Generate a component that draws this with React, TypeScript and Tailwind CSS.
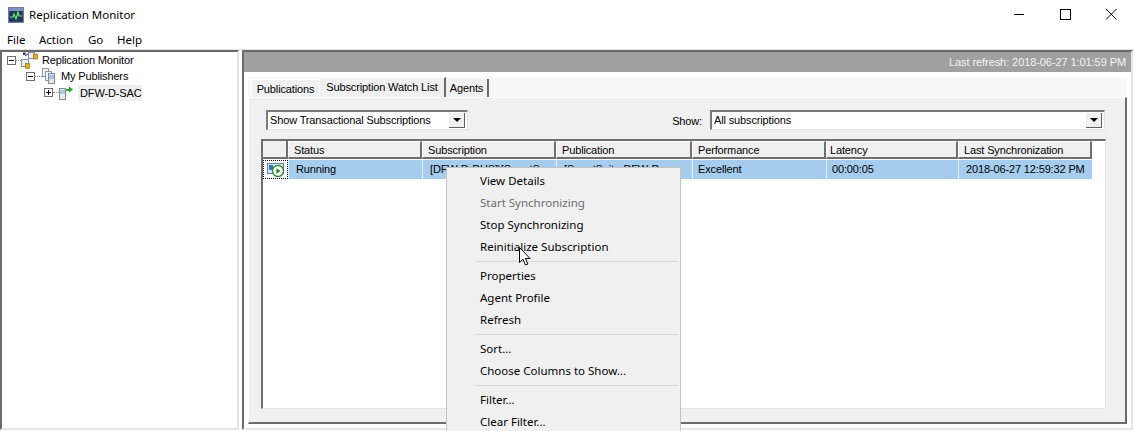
import React from "react";

const ui = "font-['Noto_Sans','Liberation_Sans',sans-serif] text-[11.5px] tracking-normal";
const ms = "font-['Liberation_Sans',Arial,sans-serif] text-[11px] tracking-[-0.14px]";

function AppIcon() {
  return (
    <svg width="16" height="16" viewBox="0 0 16 16" className="shrink-0">
      <rect x="0.5" y="0.5" width="15" height="15" fill="#33476f" stroke="#6a7ca8" />
      <rect x="1" y="1" width="14" height="3" fill="#7f93c2" />
      <rect x="2" y="4" width="12" height="10" fill="#1d3a4a" />
      <path d="M2 10h3l1-3 2 5 2-7 1 4h3" fill="none" stroke="#6fe08a" strokeWidth="1.2" />
    </svg>
  );
}

function Expander({ minus }: { minus?: boolean }) {
  return (
    <svg width="9" height="9" viewBox="0 0 9 9" className="shrink-0">
      <rect x="0.5" y="0.5" width="8" height="8" fill="#fff" stroke="#6f6f6f" />
      <path d={minus ? "M2 4.5h5" : "M2 4.5h5M4.5 2v5"} stroke="#000" />
    </svg>
  );
}

function Dots({ w }: { w: string }) {
  return <div className={`${w} shrink-0 border-t border-dotted border-[#8a8a8a]`} />;
}

function RootIcon() {
  return (
    <svg width="17" height="17" viewBox="0 0 17 17" className="shrink-0">
      <rect x="0.5" y="7.5" width="7" height="7" fill="#e8edf2" stroke="#8b96a3" />
      <rect x="7.5" y="0.5" width="6" height="6" fill="#e8edf2" stroke="#8b96a3" />
      <rect x="12.5" y="2" width="4" height="5" fill="#e5a91c" stroke="#8d6a12" strokeWidth="0.6" />
      <rect x="4.5" y="11.5" width="4" height="5" fill="#e5a91c" stroke="#8d6a12" strokeWidth="0.6" />
      <rect x="2" y="0.5" width="2.5" height="2.5" fill="#26336b" />
      <path d="M4 4 7 2" stroke="#26336b" />
    </svg>
  );
}

function PublishersIcon() {
  return (
    <svg width="14" height="16" viewBox="0 0 14 16" className="shrink-0">
      <rect x="0.5" y="0.5" width="6" height="8" fill="#eef1f5" stroke="#8b98a8" />
      <rect x="3.5" y="3.5" width="6" height="9" fill="#eef1f5" stroke="#8b98a8" />
      <rect x="6.5" y="5.5" width="6" height="10" fill="#dfe7ef" stroke="#7e8c9c" />
      <path d="M7 8h5M7 10h5" stroke="#6fa3c8" />
    </svg>
  );
}

function ServerIcon() {
  return (
    <svg width="16" height="14" viewBox="0 0 16 14" className="shrink-0">
      <rect x="0.5" y="2.5" width="6" height="11" fill="#e8edf2" stroke="#7e8c9c" />
      <path d="M1 5h5M1 7h5" stroke="#6fa3c8" />
      <path d="M7 3h3V0.5L14 3.5 10 6.5V5H7z" fill="#1fa51f" />
    </svg>
  );
}

function RunIcon() {
  return (
    <svg width="19" height="14" viewBox="0 0 19 14">
      <rect x="0.5" y="0.5" width="16" height="10" fill="#dbe7f3" stroke="#5f7fa6" />
      <rect x="2" y="2" width="4" height="5" fill="#2f74c0" />
      <circle cx="11" cy="8" r="5.5" fill="#fff" stroke="#2f8a2f" strokeWidth="1.4" />
      <path d="M9.3 5.2v5.6L13.5 8z" fill="#1f8f1f" />
    </svg>
  );
}

function Combo({ text, className }: { text: string; className: string }) {
  return (
    <div className={`${className} h-[20px] flex items-center bg-white border-t-2 border-l-2 border-[#7a7a7a] border-r border-b border-r-[#e3e3e3] border-b-[#e3e3e3] pr-[2px]`}>
      <span className="flex-1 pl-[2px] whitespace-nowrap">{text}</span>
      <div className="w-[16px] h-[15px] bg-[#f0f0f0] border-r border-b border-[#5f5f5f] flex items-center justify-center">
        <div className="w-0 h-0 border-l-[4px] border-r-[4px] border-t-[4px] border-l-transparent border-r-transparent border-t-black" />
      </div>
    </div>
  );
}

const cols = [
  { name: "Status", w: "w-[134px]", val: "Running", pl: "pl-[7px]", hpl: "pl-[5px]" },
  { name: "Subscription", w: "w-[134px]", val: "[DFW-D-DHS]\\[SmartS", pl: "pl-[7px]", hpl: "pl-[5px]" },
  { name: "Publication", w: "w-[136px]", val: "[SmartSuite-DFW-D", pl: "pl-[7px]", hpl: "pl-[5px]" },
  { name: "Performance", w: "w-[134px]", val: "Excellent", pl: "pl-[5px]", hpl: "pl-[5px]" },
  { name: "Latency", w: "w-[132px]", val: "00:00:05", pl: "pl-[5px]", hpl: "pl-[3px]" },
  { name: "Last Synchronization", w: "w-[134px]", val: "2018-06-27 12:59:32 PM", pl: "pl-[7px]", hpl: "pl-[5px]" },
];

function MenuItem({ label, disabled }: { label: string; disabled?: boolean }) {
  return (
    <div className={`h-[22px] flex items-center pl-[33px] whitespace-nowrap ${disabled ? "text-[#6d6d6d]" : "text-[#000]"}`}>
      {label}
    </div>
  );
}

function MenuSep() {
  return <div className="ml-[29px] mr-[2px] mt-[3px] mb-[3px] h-[1px] bg-[#d7d7d7]" />;
}

export default function App() {
  return (
    <div className={`relative w-[1134px] h-[431px] overflow-hidden bg-white text-black ${ms}`}>
      {/* Title bar */}
      <div className={`h-[30px] flex items-center pl-[8px] ${ui}`}>
        <AppIcon />
        <span className="ml-[5px]">Replication Monitor</span>
        <div className="ml-auto flex items-center">
          <svg width="46" height="30" viewBox="0 0 46 30"><path d="M18 14.5h10" stroke="#000" /></svg>
          <svg width="46" height="30" viewBox="0 0 46 30"><rect x="18.5" y="9.5" width="10" height="10" fill="none" stroke="#000" /></svg>
          <svg width="46" height="30" viewBox="0 0 46 30"><path d="M18 9l10.5 10.5M28.5 9 18 19.5" stroke="#000" /></svg>
        </div>
      </div>
      {/* Menu bar */}
      <div className={`h-[19px] flex items-center pl-[7px] ${ui}`}>
        <span className="w-[32px]">File</span>
        <span className="w-[49px]">Action</span>
        <span className="w-[29px]">Go</span>
        <span>Help</span>
      </div>
      {/* Main */}
      <div className="h-[382px] flex bg-white border-t border-[#e3e3e3]">
        {/* Tree */}
        <div className="w-[239px] h-[380px] border-t-2 border-l-2 border-[#6b6b6b] border-r-2 border-r-[#e3e3e3] border-b-2 border-b-[#e3e3e3]">
          <div className="h-[16px] flex items-center pl-[5px]">
            <Expander minus />
            <Dots w="w-[5px]" />
            <RootIcon />
            <span className="ml-[4px]">Replication Monitor</span>
          </div>
          <div className="h-[16px] flex items-center pl-[24px]">
            <Expander minus />
            <Dots w="w-[7px]" />
            <PublishersIcon />
            <span className="ml-[5px]">My Publishers</span>
          </div>
          <div className="h-[17px] flex items-center pl-[42px]">
            <Expander />
            <Dots w="w-[6px]" />
            <ServerIcon />
            <span className="ml-[3px] w-[64px] bg-[#f0f0f0] pl-[2px] h-[16px] leading-[16px]">DFW-D-SAC</span>
          </div>
        </div>
        {/* Right pane */}
        <div className="ml-[3px] w-[891px] h-[380px] border-l-2 border-t-2 border-[#6b6b6b] border-r-2 border-r-[#e6e6e6] border-b-2 border-b-[#e6e6e6] flex flex-col bg-white">
          <div className="h-[20px] shrink-0 bg-[#a0a0a0] text-[#f4f4f4] tracking-[-0.08px] flex items-center justify-end pr-[5px]">
            Last refresh: 2018-06-27 1:01:59 PM
          </div>
          <div className="h-[5px] shrink-0" />
          <div className="ml-[4px] w-[879px]">
            {/* Tabs */}
            <div className="h-[20px] flex items-end pl-[3px] bg-[#f8f8f8]">
              <div className="w-[68px] h-[18px] bg-[#f0f0f0] border-t border-l border-white flex items-center justify-center pt-[1px]">Publications</div>
              <div className="w-[127px] h-[20px] bg-[#f0f0f0] border-t border-l border-white border-r-2 border-r-[#6b6b6b] flex items-center justify-center">Subscription Watch List</div>
              <div className="w-[43px] h-[18px] bg-[#f0f0f0] border-r-2 border-[#6b6b6b] flex items-center justify-center pt-[1px]">Agents</div>
            </div>
            {/* Tab panel */}
            <div className="h-[327px] pt-[12px] bg-[#f0f0f0] border-t border-l border-white border-r-2 border-r-[#6b6b6b] border-b-2 border-b-[#6b6b6b]">
              <div className="flex items-center pl-[17px] pr-[20px] h-[20px]">
                <Combo text="Show Transactional Subscriptions" className="w-[202px]" />
                <span className="ml-auto mr-[8px] mt-[2px]">Show:</span>
                <Combo text="All subscriptions" className="w-[395px]" />
              </div>
              {/* Grid */}
              <div className="ml-[12px] mr-[19px] mt-[9px] h-[270px] bg-white border-t-2 border-l-2 border-[#6f6f6f] border-r border-r-[#e3e3e3] border-b border-b-[#e3e3e3]">
                <div className="flex h-[18px]">
                  <div className="w-[25px] bg-[#f0f0f0] border-r-2 border-b-2 border-[#6f6f6f]" />
                  {cols.map((c) => (
                    <div key={c.name} className={`${c.w} ${c.hpl} bg-[#f0f0f0] border-t border-l border-white border-r-2 border-b-2 border-r-[#6f6f6f] border-b-[#6f6f6f] leading-[16px] whitespace-nowrap overflow-hidden`}>
                      {c.name}
                    </div>
                  ))}
                </div>
                <div className="flex h-[19px] mt-[1px]">
                  <div className="w-[25px] h-[19px] border border-dotted border-black flex items-center justify-center pl-[1px]">
                    <RunIcon />
                  </div>
                  {cols.map((c) => (
                    <div key={c.name} className={`${c.w} ${c.pl} bg-[#a6cdee] border-l border-white/70 leading-[19px] whitespace-nowrap overflow-hidden`}>
                      {c.val}
                    </div>
                  ))}
                </div>
              </div>
            </div>
          </div>
        </div>
      </div>
      {/* Context menu */}
      <div className={`absolute left-[446px] top-[167px] w-[235px] h-[270px] bg-[#f0f0f0] border border-[#c4c4c4] pt-[2px] ${ui}`}>
        <MenuItem label="View Details" />
        <MenuItem label="Start Synchronizing" disabled />
        <MenuItem label="Stop Synchronizing" />
        <MenuItem label="Reinitialize Subscription" />
        <MenuSep />
        <MenuItem label="Properties" />
        <MenuItem label="Agent Profile" />
        <MenuItem label="Refresh" />
        <MenuSep />
        <MenuItem label="Sort..." />
        <MenuItem label="Choose Columns to Show..." />
        <MenuSep />
        <MenuItem label="Filter..." />
        <MenuItem label="Clear Filter..." />
      </div>
      {/* Cursor */}
      <svg className="absolute left-[519px] top-[247px]" width="13" height="19" viewBox="0 0 13 19">
        <path d="M0.5 0.5v15l3.5-3.2 2.5 5.7 2.4-1-2.5-5.5h4.6z" fill="#fff" stroke="#000" />
      </svg>
    </div>
  );
}
